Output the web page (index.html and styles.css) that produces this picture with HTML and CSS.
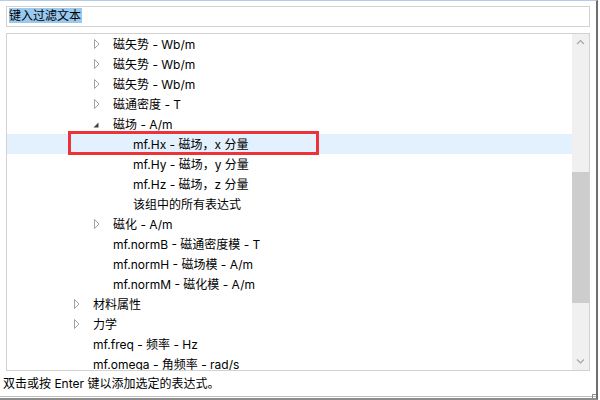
FILE: index.html
```html
<!DOCTYPE html>
<html lang="zh-CN">
<head>
<meta charset="utf-8">
<title>表达式</title>
<link rel="stylesheet" href="styles.css">
</head>
<body>
<div class="win">
  <div class="filter"><span class="sel">键入过滤文本</span></div>
  <div class="tree">
    <div class="list">
      <div class="row l3"><svg class="tg" viewBox="0 0 20 20"><path d="M1.5 5.5 L6 10 L1.5 14.5 Z"/></svg><span>磁矢势 - Wb/m</span></div>
      <div class="row l3"><svg class="tg" viewBox="0 0 20 20"><path d="M1.5 5.5 L6 10 L1.5 14.5 Z"/></svg><span>磁矢势 - Wb/m</span></div>
      <div class="row l3"><svg class="tg" viewBox="0 0 20 20"><path d="M1.5 5.5 L6 10 L1.5 14.5 Z"/></svg><span>磁矢势 - Wb/m</span></div>
      <div class="row l3"><svg class="tg" viewBox="0 0 20 20"><path d="M1.5 5.5 L6 10 L1.5 14.5 Z"/></svg><span>磁通密度 - T</span></div>
      <div class="row l3"><svg class="tg open" viewBox="0 0 20 20"><path d="M5.5 8.5 L5.5 13.5 L0.5 13.5 Z"/></svg><span>磁场 - A/m</span></div>
      <div class="row l4 selected"><span class="sp"></span><span>mf.Hx - 磁场，x 分量</span></div>
      <div class="row l4"><span class="sp"></span><span>mf.Hy - 磁场，y 分量</span></div>
      <div class="row l4"><span class="sp"></span><span>mf.Hz - 磁场，z 分量</span></div>
      <div class="row l4"><span class="sp"></span><span>该组中的所有表达式</span></div>
      <div class="row l3"><svg class="tg" viewBox="0 0 20 20"><path d="M1.5 5.5 L6 10 L1.5 14.5 Z"/></svg><span>磁化 - A/m</span></div>
      <div class="row l3"><span class="sp"></span><span>mf.normB - 磁通密度模 - T</span></div>
      <div class="row l3"><span class="sp"></span><span>mf.normH - 磁场模 - A/m</span></div>
      <div class="row l3"><span class="sp"></span><span>mf.normM - 磁化模 - A/m</span></div>
      <div class="row l2"><svg class="tg" viewBox="0 0 20 20"><path d="M1.5 5.5 L6 10 L1.5 14.5 Z"/></svg><span>材料属性</span></div>
      <div class="row l2"><svg class="tg" viewBox="0 0 20 20"><path d="M1.5 5.5 L6 10 L1.5 14.5 Z"/></svg><span>力学</span></div>
      <div class="row l2"><span class="sp"></span><span>mf.freq - 频率 - Hz</span></div>
      <div class="row l2"><span class="sp"></span><span>mf.omega - 角频率 - rad/s</span></div>
    </div>
    <div class="scroll">
      <div class="btn"><svg viewBox="0 0 17 17"><path d="M5 10 L8.5 6.5 L12 10"/></svg></div>
      <div class="track"><div class="thumb"></div></div>
      <div class="btn"><svg viewBox="0 0 17 17"><path d="M5 6.5 L8.5 10 L12 6.5"/></svg></div>
    </div>
  </div>
  <div class="status">双击或按 Enter 键以添加选定的表达式。</div>
  <div class="foot"></div>
  <div class="mark"></div>
  <div class="grip"></div>
</div>
</body>
</html>
```
FILE: styles.css
```css
* { box-sizing: border-box; }
html, body { margin: 0; padding: 0; background: #ffffff; }
body {
  font-family: "Inter", "Noto Sans CJK SC", sans-serif;
  font-size: 12px;
  color: #000;
}
.win {
  position: relative;
  width: 598px;
  height: 400px;
  border-top: 1px solid #b3cde8;
  border-right: 2px solid #6e6e6e;
  border-bottom: 2px solid #8c8c8c;
  overflow: hidden;
}
.filter {
  margin: 5px 0 0 6px;
  width: 584px;
  height: 21px;
  border: 1px solid #d2d2d2;
  padding: 1px 0 0 2px;
}
.sel {
  display: inline-block;
  background: #99c9ef;
  height: 15px;
  line-height: 15px;
  padding-right: 1px;
}
.tree {
  margin: 6px 0 0 6px;
  width: 584px;
  height: 338px;
  border: 1px solid #d2d2d2;
  display: flex;
}
.list {
  flex: 1;
  overflow: hidden;
}
.row {
  height: 20px;
  line-height: 20px;
  display: flex;
  align-items: center;
  white-space: nowrap;
}
.row span:last-child { padding-top: 1px; }
.row.l2 { padding-left: 66px; }
.row.l3 { padding-left: 86px; }
.row.l4 { padding-left: 106px; }
.row.selected { background: #e3f0fd; }
.tg, .sp {
  width: 20px;
  height: 20px;
  flex: none;
}
.tg path {
  fill: #fff;
  stroke: #a2a2a2;
  stroke-width: 1;
}
.tg.open path {
  fill: #404040;
  stroke: none;
}
.scroll {
  width: 17px;
  background: #f0f0f0;
  display: flex;
  flex-direction: column;
}
.btn { height: 17px; }
.btn svg { width: 17px; height: 17px; display: block; }
.btn path { fill: none; stroke: #a6a6a6; stroke-width: 1.2; }
.track {
  flex: 1;
  padding-top: 121px;
}
.thumb {
  height: 131px;
  background: #cdcdcd;
}
.status {
  margin-top: 3px;
  height: 20px;
  line-height: 20px;
  padding-left: 3px;
}
.foot {
  margin-top: 2px;
  border-top: 1px solid #bdbdbd;
}
.mark {
  position: absolute;
  left: 68px;
  top: 130px;
  width: 251px;
  height: 24px;
  border: 3px solid #ee3338;
}
.grip {
  position: absolute;
  right: 0;
  bottom: 0;
  width: 4px;
  height: 4px;
  border-left: 1px solid #8c8c8c;
  border-top: 1px solid #8c8c8c;
}
```
